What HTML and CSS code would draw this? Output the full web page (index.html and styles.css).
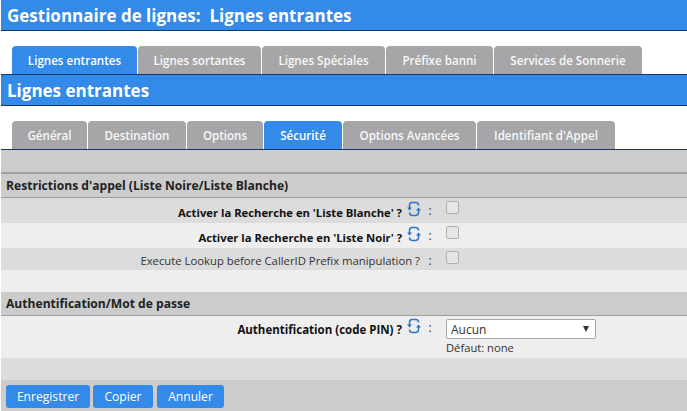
FILE: index.html
```html
<!DOCTYPE html>
<html lang="fr">
<head>
<meta charset="utf-8">
<title>Gestionnaire de lignes</title>
<link rel="stylesheet" href="styles.css">
</head>
<body>
<svg class="defs" width="0" height="0" aria-hidden="true"><symbol id="sync" viewBox="0 0 14 16"><path d="M2.5 7V4.5C2.5 2.8 3.6 1.6 5.2 1.6H8.8C10.4 1.6 11.5 2.8 11.5 4.4M11.5 9V11.6C11.5 13.2 10.4 14.4 8.8 14.4H5.2C3.6 14.4 2.5 13.2 2.5 11.6" fill="none" stroke="currentColor" stroke-width="1.5"/><path d="M0 6.5h5L2.5 9.5zM9 9.5h5L11.5 6.5z" fill="currentColor"/></symbol></svg>
<div class="bar title">Gestionnaire de lignes:&nbsp; Lignes entrantes</div>
<nav class="tabs main-tabs">
<a class="tab active w1">Lignes entrantes</a>
<a class="tab w2">Lignes sortantes</a>
<a class="tab w3">Lignes Spéciales</a>
<a class="tab w4">Préfixe banni</a>
<a class="tab w5">Services de Sonnerie</a>
</nav>
<div class="bar subtitle">Lignes entrantes</div>
<nav class="tabs sub-tabs">
<a class="tab s1">Général</a>
<a class="tab s2">Destination</a>
<a class="tab s3">Options</a>
<a class="tab active s4">Sécurité</a>
<a class="tab s5">Options Avancées</a>
<a class="tab s6">Identifiant d'Appel</a>
</nav>
<main class="panel">
<div class="spacer-top"></div>
<h2 class="section">Restrictions d'appel (Liste Noire/Liste Blanche)</h2>
<div class="row dark h25">
<label class="lbl bold">Activer la Recherche en 'Liste Blanche' ?</label><svg class="sync"><use href="#sync"/></svg><span class="colon">:</span>
<span class="val"><span class="check"></span></span>
</div>
<div class="row light h25">
<label class="lbl bold">Activer la Recherche en 'Liste Noir' ?</label><svg class="sync"><use href="#sync"/></svg><span class="colon">:</span>
<span class="val"><span class="check"></span></span>
</div>
<div class="row dark h22">
<label class="lbl plain">Execute Lookup before CallerID Prefix manipulation ?</label><span class="colon">:</span>
<span class="val"><span class="check"></span></span>
</div>
<div class="row light h22"></div>
<h2 class="section">Authentification/Mot de passe</h2>
<div class="row light h42">
<label class="lbl bold auth">Authentification (code PIN) ?</label><svg class="sync"><use href="#sync"/></svg><span class="colon">:</span>
<span class="val">
<span class="select">Aucun<span class="arrow"></span></span>
<span class="hint">Défaut: none</span>
</span>
</div>
<div class="row dark h22"></div>
<div class="actions">
<button class="btn b1">Enregistrer</button>
<button class="btn b2">Copier</button>
<button class="btn b3">Annuler</button>
</div>
</main>
</body>
</html>
```
FILE: styles.css
```css
* { box-sizing: border-box; }
html, body { margin: 0; height: 411px; overflow: hidden; }
body { background: #fff; padding-left: 1px; font: 12px "Open Sans", sans-serif; color: #222; }
.defs { position: absolute; }
.bar { background: #338ae8; color: #fff; font-weight: 700; font-size: 17px; border-bottom: 1px solid #17375e; padding-left: 6px; display: flex; align-items: center; white-space: pre; }
.title { height: 31px; }
.subtitle { height: 31px; }
.tabs { display: flex; gap: 1px; align-items: flex-end; padding-left: 11px; background: #fff; border-bottom: 1px solid #17375e; }
.main-tabs { height: 44px; }
.sub-tabs { height: 44px; }
.tab { height: 28px; background: #a6a6a8; color: #f8f8f8; font-weight: 600; font-size: 11.6px; border-radius: 4px 4px 0 0; display: flex; align-items: center; justify-content: center; }
.tab.active { background: #338ae8; color: #fff; }
.w1 { width: 125px; } .w2 { width: 123px; } .w3 { width: 123px; } .w4 { width: 107px; } .w5 { width: 148px; }
.s1 { width: 75px; } .s2 { width: 98px; } .s3 { width: 76px; } .s4 { width: 78px; } .s5 { width: 133px; } .s6 { width: 138px; }
.panel { background: #ccc; }
.spacer-top { height: 24px; border-bottom: 2px solid #a0a0a0; background: #ccc; }
.section { margin: 0; height: 24px; background: #ccc; border-bottom: 1px solid #a0a0a0; font-size: 12.1px; font-weight: 700; color: #222; padding-left: 5px; display: flex; align-items: center; }
.row { display: grid; grid-template-columns: 402px 18px 25px 1fr; align-items: start; }
.dark { background: #dcdcdc; }
.light { background: #eee; }
.h25 { height: 25px; padding-top: 4px; }
.h22 { height: 22px; padding-top: 4px; }
.h42 { height: 42px; padding-top: 3px; }
.lbl { text-align: right; white-space: nowrap; color: #111; padding-top: 3px; padding-right: 1px; line-height: 16px; }
.bold { font-weight: 700; font-size: 11.25px; }
.auth { font-size: 11.5px; }
.plain { font-weight: 400; font-size: 11.3px; color: #333; grid-column: span 2; padding-top: 1px; padding-right: 1px; }
.sync { width: 14px; height: 16px; color: #2a74c6; margin-left: 4px; margin-top: -1px; }
.colon { text-align: center; color: #333; line-height: 14px; padding-right: 7px; padding-top: 2px; }
.val { display: block; }
.check { display: block; width: 13px; height: 13px; background: #e6e6e6; border: 1px solid #b0b0b0; border-radius: 2px; margin-top: -1px; }
.select { display: flex; align-items: center; justify-content: space-between; width: 150px; height: 20px; background: #fff; border: 1px solid #a6a6a6; border-radius: 2px; padding: 0 6px 0 4px; font-size: 12px; color: #333; }
.arrow { width: 0; height: 0; border-left: 3.5px solid transparent; border-right: 3.5px solid transparent; border-top: 6px solid #333; }
.hint { display: block; font-size: 11.2px; line-height: 16px; margin-top: 1px; color: #333; }
.actions { height: 31px; background: #ccc; display: flex; gap: 3px; padding: 5px 0 0 5px; }
.btn { height: 23px; background: #338ae8; color: #fff; border: 0; border-radius: 3px; padding: 0; font: 12.1px "Open Sans", sans-serif; }
.b1 { width: 84px; } .b2 { width: 60px; margin-right: 1px; } .b3 { width: 67px; }
```
